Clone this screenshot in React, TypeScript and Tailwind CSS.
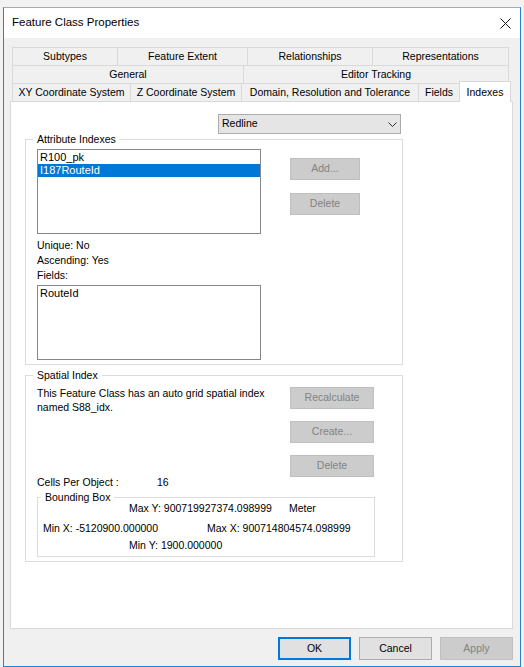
import React from "react";

const uiFont = "font-['Liberation_Sans',Arial,sans-serif]";

type TabProps = { label: string; className: string };

function Tab({ label, className }: TabProps) {
  return (
    <div
      className={`flex h-[18px] items-center justify-center border-l border-t border-[#d9d9d9] bg-[#f0f0f0] ${className}`}
    >
      {label}
    </div>
  );
}

function DisabledButton({ label, className }: { label: string; className: string }) {
  return (
    <div
      className={`flex items-center justify-center border border-[#bfbfbf] bg-[#cccccc] text-[#838383] ${className}`}
    >
      {label}
    </div>
  );
}

function ListBox({
  items,
  selected,
  className,
}: {
  items: string[];
  selected?: number;
  className: string;
}) {
  return (
    <div
      className={`border border-[#828790] bg-white pt-[1px] font-['Liberation_Sans',Arial,sans-serif] text-[11px] leading-[13px] ${className}`}
    >
      {items.map((item, i) => (
        <div
          key={item}
          className={i === selected ? "bg-[#0078d7] pl-[2px] text-white" : "pl-[2px]"}
        >
          {item}
        </div>
      ))}
    </div>
  );
}

export default function App() {
  return (
    <div className={`h-[667px] w-[524px] bg-[#f2f2f2] pl-[3px] pt-[7px] text-[10.5px] text-black ${uiFont}`}>
      <div className="flex h-[660px] w-[518px] flex-col border border-[#1f86d6] border-t-[#a9a9a9] bg-[#f0f0f0]">
        {/* title bar */}
        <div className="flex h-[30px] shrink-0 items-center justify-between bg-white pl-[8px] pr-[9px] text-[11.5px]">
          <span>Feature Class Properties</span>
          <svg width="11" height="11" viewBox="0 0 11 11" className="mt-[1px]">
            <path d="M0.5 0.5 L10.5 10.5 M10.5 0.5 L0.5 10.5" stroke="#111" strokeWidth="1" />
          </svg>
        </div>

        <div className="ml-[6px] mt-[9px] w-[503px]">
          {/* tab strip */}
          <div className="pl-[2px]">
            <div className="flex">
              <Tab label="Subtypes" className="w-[105px]" />
              <Tab label="Feature Extent" className="w-[130px]" />
              <Tab label="Relationships" className="w-[125px]" />
              <Tab label="Representations" className="w-[137px] border-r" />
            </div>
            <div className="flex">
              <Tab label="General" className="w-[231px]" />
              <Tab label="Editor Tracking" className="w-[266px] border-r" />
            </div>
            <div className="flex h-[18px] items-start">
              <Tab label="XY Coordinate System" className="w-[118px]" />
              <Tab label="Z Coordinate System" className="w-[111px]" />
              <Tab label="Domain, Resolution and Tolerance" className="w-[177px]" />
              <Tab label="Fields" className="w-[41px]" />
              <div className="relative z-10 -mt-[2px] flex h-[21px] w-[52px] justify-center border-x border-t border-[#d9d9d9] bg-white pt-[3px]">
                Indexes
              </div>
            </div>
          </div>

          {/* tab page */}
          <div className="h-[528px] border border-[#d9d9d9] bg-white">
            <div className="ml-[207px] mt-[12px] flex h-[20px] w-[183px] items-center justify-between border border-[#acacac] bg-[#e5e5e5] pl-[3px] pr-[3px]">
              <span>Redline</span>
              <svg width="9" height="5" viewBox="0 0 9 5">
                <path d="M0.5 0.5 L4.5 4.5 L8.5 0.5" fill="none" stroke="#333" strokeWidth="1" />
              </svg>
            </div>

            <fieldset className="-mt-[1px] ml-[14px] w-[378px] border border-[#dcdcdc] pb-[4px]">
              <legend className="ml-[7px] px-[4px] leading-[12px]">Attribute Indexes</legend>
              <div className="ml-[11px] mt-[4px] flex items-start">
                <ListBox items={["R100_pk", "I187RouteId"]} selected={1} className="h-[85px] w-[224px]" />
                <div className="ml-[29px] mt-[9px] flex flex-col gap-[13px]">
                  <DisabledButton label="Add..." className="h-[22px] w-[70px]" />
                  <DisabledButton label="Delete" className="h-[22px] w-[70px]" />
                </div>
              </div>
              <div className="ml-[11px] mt-[4px] leading-[15px]">
                <div>Unique: No</div>
                <div>Ascending: Yes</div>
                <div>Fields:</div>
              </div>
              <ListBox items={["RouteId"]} className="ml-[11px] mt-[2px] h-[75px] w-[224px]" />
            </fieldset>

            <fieldset className="ml-[14px] mt-[4px] w-[378px] border border-[#dcdcdc] pb-[4px]">
              <legend className="ml-[7px] px-[4px] leading-[12px]">Spatial Index</legend>
              <div className="mt-[5px] flex items-start">
                <div className="ml-[11px] flex h-[103px] w-[253px] flex-col justify-between leading-[14px]">
                  <p>
                    This Feature Class has an auto grid spatial index
                    <br />
                    named S88_idx.
                  </p>
                  <div className="flex">
                    <span className="w-[120px]">Cells Per Object :</span>
                    <span>16</span>
                  </div>
                </div>
                <div className="mt-[1px] flex flex-col gap-[12px]">
                  <DisabledButton label="Recalculate" className="h-[22px] w-[84px]" />
                  <DisabledButton label="Create..." className="h-[22px] w-[84px]" />
                  <DisabledButton label="Delete" className="h-[22px] w-[84px]" />
                </div>
              </div>

              <fieldset className="ml-[11px] mt-[2px] w-[338px] border border-[#dcdcdc] pb-[4px] leading-[14px]">
                <legend className="ml-[3px] px-[4px] leading-[12px]">Bounding Box</legend>
                <div className="-mt-[2px] flex pl-[91px]">
                  <span className="w-[160px]">Max Y: 900719927374.098999</span>
                  <span>Meter</span>
                </div>
                <div className="mt-[6px] flex pl-[5px]">
                  <span className="w-[164px]">Min X: -5120900.000000</span>
                  <span>Max X: 900714804574.098999</span>
                </div>
                <div className="mt-[3px] pl-[91px]">Min Y: 1900.000000</div>
              </fieldset>
            </fieldset>
          </div>

          {/* dialog buttons */}
          <div className="mt-[8px] flex justify-end gap-[8px]">
            <div className="flex h-[23px] w-[73px] items-center justify-center border-2 border-[#0078d7] bg-[#e1e1e1]">
              OK
            </div>
            <div className="flex h-[23px] w-[73px] items-center justify-center border border-[#adadad] bg-[#e1e1e1]">
              Cancel
            </div>
            <DisabledButton label="Apply" className="h-[23px] w-[73px]" />
          </div>
        </div>
      </div>
    </div>
  );
}
